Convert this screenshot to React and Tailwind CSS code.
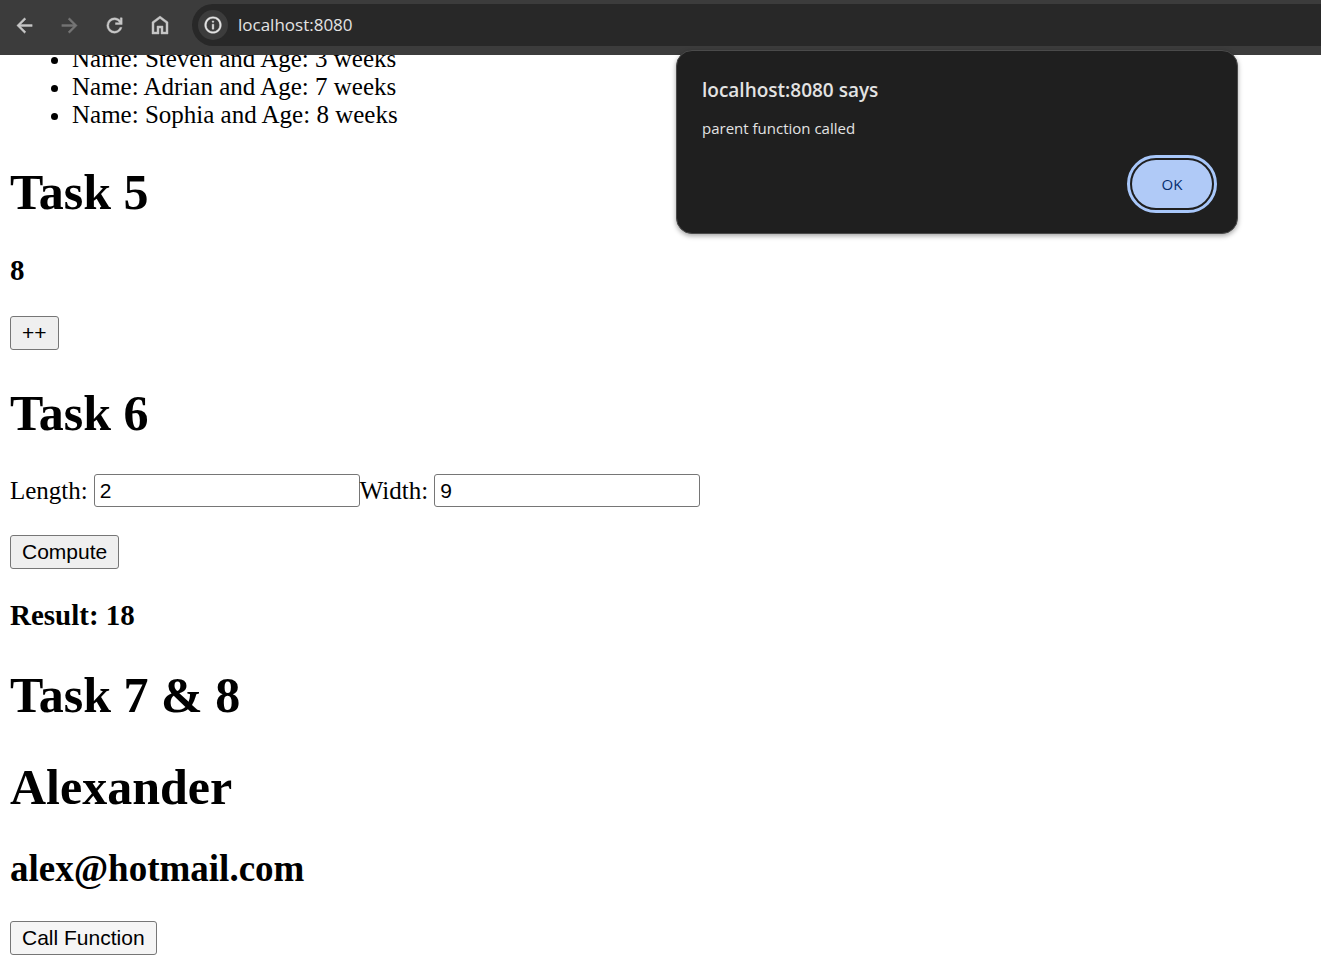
import { useState } from "react";

const chromeFont = "font-['Open_Sans','Noto_Sans',sans-serif]";

const controlText = "font-['Liberation_Sans',Arial,sans-serif] text-[21px] leading-6 text-black";

const icons = {
  back: "m313-440 224 224-57 56-320-320 320-320 57 56-224 224h487v80H313Z",
  forward: "M647-440H160v-80h487L423-744l57-56 320 320-320 320-57-56 224-224Z",
  reload: "M480-160q-134 0-227-93t-93-227q0-134 93-227t227-93q69 0 132 28.5T720-690v-110h80v280H520v-80h168q-32-56-87.5-88T480-720q-100 0-170 70t-70 170q0 100 70 170t170 70q77 0 139-44t87-116h84q-28 106-114 173t-196 67Z",
  home: "M240-200h120v-240h240v240h120v-360L480-740 240-560v360Zm-80 80v-480l320-240 320 240v480H520v-240h-80v240H160Z",
  info: "M440-280h80v-240h-80v240Zm40-320q17 0 28.5-11.5T520-640q0-17-11.5-28.5T480-680q-17 0-28.5 11.5T440-640q0 17 11.5 28.5T480-600Zm0 520q-83 0-156-31.5T197-197q-54-54-85.5-127T80-480q0-83 31.5-156T197-763q54-54 127-85.5T480-880q83 0 156 31.5T763-763q54 54 85.5 127T880-480q0 83-31.5 156T763-197q-54 54-127 85.5T480-80Zm0-80q134 0 227-93t93-227q0-134-93-227t-227-93q-134 0-227 93t-93 227q0 134 93 227t227 93Z",
};

function Icon({ name, className = "size-[23px]" }) {
  return (
    <svg viewBox="0 -960 960 960" className={className} fill="currentColor" stroke="currentColor" strokeWidth="18" aria-hidden="true">
      <path d={icons[name]} />
    </svg>
  );
}

function Toolbar() {
  return (
    <header className={`${chromeFont} flex bg-[#3c3c3c] pt-1 pb-[9px] pl-[13px] text-[#c7c7c7]`}>
      <nav className="flex items-center gap-[22px]">
        <button type="button" aria-label="Back"><Icon name="back" /></button>
        <button type="button" aria-label="Forward" disabled className="text-[#757575]"><Icon name="forward" /></button>
        <button type="button" aria-label="Reload"><Icon name="reload" /></button>
        <button type="button" aria-label="Home"><Icon name="home" className="size-6" /></button>
      </nav>
      <div className="ml-5 flex h-[42px] flex-1 items-center gap-[10px] rounded-l-full bg-[#282828] pl-[6px]">
        <button type="button" aria-label="Site information" className="flex size-[30px] items-center justify-center rounded-full bg-[#3c3c3c] text-[#e3e3e3]">
          <Icon name="info" className="size-5" />
        </button>
        <input aria-label="Address" defaultValue="localhost:8080" className="min-w-0 flex-1 bg-transparent text-[17px] leading-6 text-[#e3e3e3] outline-none" />
      </div>
    </header>
  );
}

function Alert({ onClose }) {
  return (
    <div role="alertdialog" aria-labelledby="alert-title" aria-describedby="alert-text" className={`${chromeFont} absolute top-[50px] right-[83px] z-20 flex w-[562px] flex-col rounded-2xl border border-[#4a4a4a] bg-[#1f1f1f] p-[25px] text-[#e3e3e3] shadow-[0_2px_5px_rgba(0,0,0,0.35)]`}>
      <h2 id="alert-title" className="text-[19px] leading-7 font-semibold">localhost:8080 says</h2>
      <p id="alert-text" className="mt-3 text-[15px] leading-6">parent function called</p>
      <button type="button" onClick={onClose} className="mt-5 h-12 w-20 self-end rounded-full bg-[#b0caf7] text-[15px] text-[#062e6f] outline-3 outline-offset-2 outline-[#a8c7fa]">OK</button>
    </div>
  );
}

function PageButton({ children, onClick, tone = "bg-[#efefef]" }) {
  return (
    <button type="button" onClick={onClick} className={`${controlText} ${tone} block rounded-[3px] border border-[#767676] px-[11px] py-1`}>
      {children}
    </button>
  );
}

function NumberField({ id, label, value, onChange }) {
  return (
    <>
      <label htmlFor={id} className="mr-[6px]">{label}</label>
      <input id={id} value={value} onChange={(e) => onChange(e.target.value)} className={`${controlText} h-[33px] w-[266px] rounded-[3px] border border-[#767676] bg-white px-[5px]`} />
    </>
  );
}

function Title({ children }) {
  return <h1 className="mt-[34px] mb-8 text-[50px] leading-[58px] font-bold">{children}</h1>;
}

const people = [
  { name: "Steven", age: 3 },
  { name: "Adrian", age: 7 },
  { name: "Sophia", age: 8 },
];

export default function App() {
  const [count, setCount] = useState(8);
  const [length, setLength] = useState("2");
  const [width, setWidth] = useState("9");
  const [result, setResult] = useState(18);
  const [open, setOpen] = useState(true);

  return (
    <div className="relative flex min-h-screen flex-col bg-white">
      <div className="z-10"><Toolbar /></div>
      <main className="-mt-[10px] px-[10px] pb-[11px] font-['Liberation_Serif','Times_New_Roman',serif] text-[25px] leading-7 text-black">
        <ul className="list-disc pl-[62px]">
          {people.map((p) => (
            <li key={p.name}>Name: {p.name} and Age: {p.age} weeks</li>
          ))}
        </ul>

        <Title>Task 5</Title>
        <h3 className="my-[29px] text-[29px] leading-[34px] font-bold">{count}</h3>
        <PageButton onClick={() => setCount(count + 1)}>++</PageButton>

        <Title>Task 6</Title>
        <div className="flex flex-wrap items-center">
          <NumberField id="length" label="Length:" value={length} onChange={setLength} />
          <NumberField id="width" label="Width:" value={width} onChange={setWidth} />
        </div>
        <div className="mt-7">
          <PageButton onClick={() => setResult(Number(length) * Number(width))}>Compute</PageButton>
        </div>
        <h3 className="my-[29px] text-[29px] leading-[34px] font-bold">Result: {result}</h3>

        <Title>Task 7 &amp; 8</Title>
        <Title>Alexander</Title>
        <h2 className="my-[31px] text-[37px] leading-[42px] font-bold">alex@hotmail.com</h2>
        <PageButton tone="bg-[#f5f5f5]" onClick={() => setOpen(true)}>Call Function</PageButton>
      </main>
      {open && <Alert onClose={() => setOpen(false)} />}
    </div>
  );
}
